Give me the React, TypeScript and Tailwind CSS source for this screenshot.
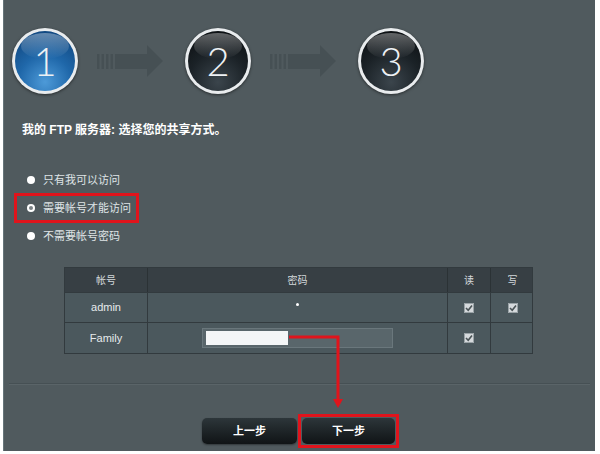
import React from 'react'

const cjk = { fontFamily: '"Liberation Sans", "Noto Sans CJK SC", sans-serif' }

function StepCircle({ n, active }: { n: number; active?: boolean }) {
    return (
        <div className="flex h-[66px] w-[66px] shrink-0 items-center justify-center rounded-full bg-[#e9ecee] p-[3px] shadow-[0_1px_3px_rgba(0,0,0,0.5)]">
            <div
                className={`relative flex h-full w-full items-center justify-center overflow-hidden rounded-full ${active
                    ? 'bg-[radial-gradient(circle_at_50%_85%,#4d9ad8_0%,#1f67a9_45%,#0c3e74_100%)]'
                    : 'bg-[radial-gradient(circle_at_50%_85%,#3b454c_0%,#1b2227_50%,#080b0d_100%)]'
                    }`}
            >
                <div className="absolute left-[6px] right-[6px] top-[2px] h-[26px] rounded-[50%] bg-gradient-to-b from-white/35 to-white/0" />
                <span
                    className="relative text-[40px] font-light leading-none text-[#eef1f4]"
                    style={{ fontFamily: 'Lato, "Open Sans", sans-serif' }}
                >
                    {n}
                </span>
            </div>
        </div>
    )
}

function StepArrow() {
    return (
        <svg width="66" height="32" viewBox="0 0 66 32" className="shrink-0">
            <g fill="#465054">
                <rect x="0" y="9" width="2.5" height="15" />
                <rect x="4.5" y="9" width="2.5" height="15" />
                <rect x="9" y="9" width="2.5" height="15" />
                <rect x="13.5" y="9" width="2.5" height="15" />
                <rect x="18" y="9" width="33" height="15" />
                <polygon points="50,0 66,16 50,32" />
            </g>
        </svg>
    )
}

function Check() {
    return (
        <span className="inline-flex h-[10px] w-[10px] items-center justify-center rounded-[1px] bg-[#d5d9dc] shadow-[inset_0_0_0_1px_#9aa3a7]">
            <svg width="8" height="8" viewBox="0 0 8 8">
                <path d="M1 4 L3.2 6.2 L7 1.5" fill="none" stroke="#4a5356" strokeWidth="1.6" />
            </svg>
        </span>
    )
}

export default function App() {
    const options = ['只有我可以访问', '需要帐号才能访问', '不需要帐号密码']

    return (
        <div className="h-[454px] w-[600px] bg-white" style={cjk}>
            <div className="relative ml-[3px] h-[451px] w-[592px] border-l border-[#66757a] bg-[#505a5e]">
                {/* steps */}
                <div className="flex items-center pl-[8px] pt-[28px]">
                    <StepCircle n={1} active />
                    <div className="ml-[19px] mr-[22px] flex"><StepArrow /></div>
                    <StepCircle n={2} />
                    <div className="ml-[19px] mr-[22px] flex"><StepArrow /></div>
                    <StepCircle n={3} />
                </div>

                <h1 className="mt-[29px] pl-[18px] text-[12px] font-bold leading-[14px] text-white">
                    我的 FTP 服务器: 选择您的共享方式。
                </h1>

                {/* radios */}
                <div className="mt-[29px] flex flex-col">
                    {options.map((label, i) => (
                        <div
                            key={label}
                            className={`ml-[11px] flex h-[28px] w-[123px] items-center gap-[8px] pl-[12px] ${i === 1 ? 'outline outline-[3px] -outline-offset-2 outline-[#e0141c]' : ''}`}
                        >
                            {i === 1 ? (
                                <span className="flex h-[8px] w-[8px] items-center justify-center rounded-full bg-white">
                                    <span className="h-[4px] w-[4px] rounded-full bg-[#7a8185]" />
                                </span>
                            ) : (
                                <span className="h-[8px] w-[8px] rounded-full bg-white" />
                            )}
                            <span className="text-[11px] text-[#dfe4e6]">{label}</span>
                        </div>
                    ))}
                </div>

                {/* accounts table */}
                <div className="ml-[60px] mt-[17px] w-[469px] border border-[#323a3e] text-[11px] text-[#e6eaec]">
                    <div className="grid h-[24px] grid-cols-[83px_300px_43px_43px] bg-[#373f44] text-[10px] text-[#d3d8db]">
                        <div className="flex items-center justify-center border-r border-[#2b3235]">帐号</div>
                        <div className="flex items-center justify-center border-r border-[#2b3235]">密码</div>
                        <div className="flex items-center justify-center border-r border-[#2b3235]">读</div>
                        <div className="flex items-center justify-center">写</div>
                    </div>
                    <div className="grid h-[30px] grid-cols-[83px_300px_43px_43px] border-t border-[#323a3e] bg-[#4b585d]">
                        <div className="flex items-center justify-center border-r border-[#323a3e]">admin</div>
                        <div className="flex items-center justify-center border-r border-[#323a3e]">
                            <span className="mb-[6px] h-[3px] w-[3px] rounded-full bg-white" />
                        </div>
                        <div className="flex items-center justify-center border-r border-[#323a3e]"><Check /></div>
                        <div className="flex items-center justify-center"><Check /></div>
                    </div>
                    <div className="grid h-[31px] grid-cols-[83px_300px_43px_43px] border-t border-[#323a3e] bg-[#4b585d]">
                        <div className="flex items-center justify-center border-r border-[#323a3e]">Family</div>
                        <div className="flex items-center border-r border-[#323a3e] pl-[54px]">
                            <div className="flex h-[20px] w-[191px] items-center border border-[#6a777c] bg-[#59666b] px-[3px]">
                                <div className="h-[14px] w-[82px] bg-[#f4f6f7]" />
                            </div>
                        </div>
                        <div className="flex items-center justify-center border-r border-[#323a3e]"><Check /></div>
                        <div />
                    </div>
                </div>

                <div className="mx-[5px] mt-[29px] border-t border-[#465054] shadow-[0_1px_0_#5a6468]" />

                {/* buttons */}
                <div className="mt-[30px] flex items-center gap-[1px] pl-[198px]">
                    <button
                        type="button"
                        className="h-[26px] w-[95px] rounded-[5px] bg-gradient-to-b from-[#2d363a] to-[#101416] text-[11px] font-bold text-white shadow-[0_1px_2px_rgba(0,0,0,0.4)]"
                    >
                        上一步
                    </button>
                    <div className="border-[3px] border-[#e0141c] p-[1px]">
                        <button
                            type="button"
                            className="block h-[26px] w-[93px] rounded-[5px] bg-gradient-to-b from-[#2d363a] to-[#101416] text-[11px] font-bold text-white"
                        >
                            下一步
                        </button>
                    </div>
                </div>

                {/* annotation arrow */}
                <svg className="pointer-events-none absolute left-0 top-0" width="592" height="451">
                    <polyline points="285,337 334,337 334,401" fill="none" stroke="#e0141c" strokeWidth="3" />
                    <polygon points="329,399 339,399 334,408" fill="#e0141c" />
                </svg>
            </div>
        </div>
    )
}
